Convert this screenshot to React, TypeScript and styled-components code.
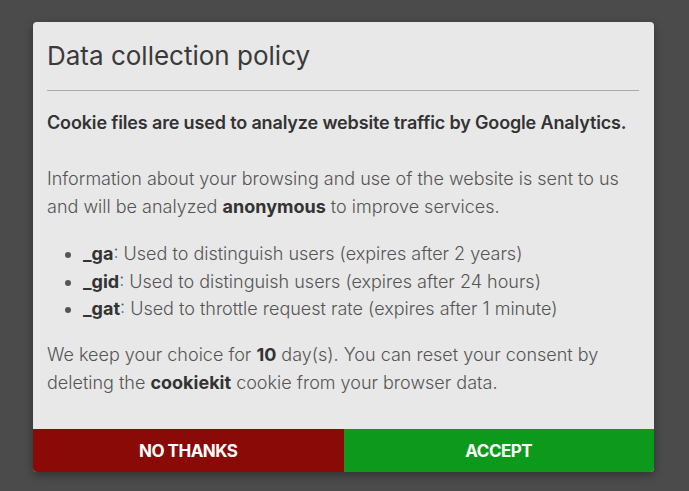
import styled, { createGlobalStyle } from "styled-components";

const GlobalStyle = createGlobalStyle`
html, body {
  margin: 0;
  padding: 0;
  background: #4b4b4b;
  font-family: Inter, Roboto, sans-serif;
}
`

const cookies = [
    { name: "_ga", text: "Used to distinguish users (expires after 2 years)" },
    { name: "_gid", text: "Used to distinguish users (expires after 24 hours)" },
    { name: "_gat", text: "Used to throttle request rate (expires after 1 minute)" },
]

export default function App() {
    return (
        <>
            <GlobalStyle />
            <Overlay>
                <Dialog>
                    <Body>
                        <Title>Data collection policy</Title>
                        <Divider />
                        <Lead>Cookie files are used to analyze website traffic by Google Analytics.</Lead>
                        <Paragraph>
                            Information about your browsing and use of the website is sent to us
                            and will be analyzed <b>anonymous</b> to improve services.
                        </Paragraph>
                        <CookieList>
                            {cookies.map((c) => (
                                <li key={c.name}>
                                    <b>{c.name}</b>: {c.text}
                                </li>
                            ))}
                        </CookieList>
                        <Paragraph>
                            We keep your choice for <b>10</b> day(s). You can reset your consent by
                            deleting the <b>cookiekit</b> cookie from your browser data.
                        </Paragraph>
                    </Body>
                    <Actions>
                        <ActionButton $tone="deny">NO THANKS</ActionButton>
                        <ActionButton $tone="accept">ACCEPT</ActionButton>
                    </Actions>
                </Dialog>
            </Overlay>
        </>
    );
}

const Overlay = styled.div`
height: 491px;
display: flex;
padding: 22px 0 0 33px;
box-sizing: border-box;
`

const Dialog = styled.div`
width: 621px;
height: 450px;
background: #e8e8e8;
border-radius: 4px;
overflow: hidden;
display: flex;
flex-direction: column;
box-shadow: 0 3px 10px rgba(0, 0, 0, 0.35);
`

const Body = styled.div`
flex: 1;
padding: 0 15px 0 14px;
color: #444;
`

const Title = styled.h2`
margin: 0;
padding-top: 16px;
font-size: 26px;
font-weight: 400;
line-height: 36px;
color: #3a3a3a;
`

const Divider = styled.hr`
margin: 16px 0 0;
border: none;
border-top: 1px solid #aaa;
`

const Lead = styled.p`
margin: 20px 0 0;
font-size: 18px;
font-weight: 600;
letter-spacing: -0.15px;
line-height: 24px;
color: #333;
`

const Paragraph = styled.p`
margin: 30px 0 0;
font-size: 18px;
font-weight: 300;
line-height: 28px;
color: #555;

b {
    font-weight: 700;
    color: #333;
}
`

const CookieList = styled.ul`
margin: 19px 0 0;
padding-left: 36px;
font-size: 18px;
font-weight: 300;
line-height: 27.5px;
color: #555;

b {
    font-weight: 700;
    color: #333;
}

& + ${Paragraph} {
    margin-top: 18px;
}
`

const ActionButton = styled.button<{ $tone: "deny" | "accept" }>`
flex: 1;
border: none;
margin: 0;
height: 43px;
font-family: Inter, Roboto, sans-serif;
font-size: 17px;
font-weight: 700;
letter-spacing: -0.5px;
color: #fff;
background: ${(p) => (p.$tone === "deny" ? "#8a0a08" : "#0c991c")};
cursor: pointer;
`

const Actions = styled.div`
display: flex;
`
